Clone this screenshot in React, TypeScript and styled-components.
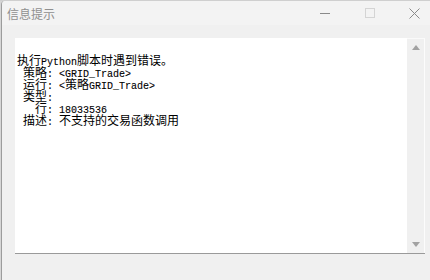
import React from 'react'
import styled, { createGlobalStyle } from 'styled-components'

const GlobalStyle = createGlobalStyle`
  html, body {
    margin: 0;
    padding: 0;
    width: 430px;
    height: 280px;
    overflow: hidden;
    background: #cfcfcf;
  }
`

const Desktop = styled.div`
  width: 430px;
  height: 280px;
  padding-left: 1px;
  box-sizing: border-box;
  background: #d6d6d6;
`

const Window = styled.div`
  display: flex;
  flex-direction: column;
  height: 279px;
  margin-top: 1px;
  border-left: 1px solid #9c9c9c;
  border-top-left-radius: 4px;
  background: #f0f0f0;
  overflow: hidden;
`

const TitleBar = styled.div`
  display: flex;
  align-items: center;
  height: 24px;
  background: #f3f3f3;
`

const Title = styled.span`
  flex: 1;
  padding-left: 5px;
  font-family: 'Noto Sans CJK SC', sans-serif;
  font-size: 12px;
  color: #8f8f8f;
`

const Controls = styled.div`
  display: flex;
  margin-right: -7px;
`

const ControlButton = styled.div`
  display: flex;
  align-items: center;
  justify-content: center;
  width: 45px;
  height: 24px;
`

const TextBox = styled.div`
  display: flex;
  height: 216px;
  margin: 13px 5px 0 13px;
  background: #fff;
  border-bottom: 1px solid #9a9a9a;
  box-sizing: border-box;
`

const Content = styled.div`
  flex: 1;
  padding: 16px 0 0 2px;
  color: #000;
`

const Line = styled.div`
  height: 12px;
  line-height: 12px;
  white-space: pre;
  font-family: 'Noto Sans CJK SC', sans-serif;
  font-size: 12px;
`

const Mono = styled.span`
  font-family: 'Liberation Mono', monospace;
  font-size: 10px;
  line-height: 12px;
  vertical-align: baseline;
  -webkit-text-stroke: 0.1px #000;
`

const ScrollBar = styled.div`
  display: flex;
  flex-direction: column;
  justify-content: space-between;
  width: 17px;
  background: #f0f0f0;
  border-right: 1px solid #fcfcfc;
  border-top: 1px solid #fafafa;
`

const ArrowButton = styled.div`
  display: flex;
  align-items: center;
  justify-content: center;
  height: 17px;
`

const Arrow: React.FC<{ down?: boolean }> = ({ down }) => (
  <svg width="8" height="5" viewBox="0 0 8 5">
    <polygon points={down ? '0,0 8,0 4,5' : '0,5 8,5 4,0'} fill="#a2a2a2" />
  </svg>
)

export default function App() {
  return (
    <>
      <GlobalStyle />
      <Desktop>
        <Window>
          <TitleBar>
            <Title>信息提示</Title>
            <Controls>
              <ControlButton>
                <svg width="10" height="10" viewBox="0 0 10 10">
                  <line x1="0" y1="5.5" x2="10" y2="5.5" stroke="#8a8a8a" strokeWidth="1" />
                </svg>
              </ControlButton>
              <ControlButton>
                <svg width="10" height="10" viewBox="0 0 10 10">
                  <rect x="0.5" y="0.5" width="9" height="9" fill="none" stroke="#d4d4d4" strokeWidth="1" />
                </svg>
              </ControlButton>
              <ControlButton>
                <svg width="11" height="11" viewBox="0 0 11 11">
                  <path d="M0.5 0.5 L10.5 10.5 M10.5 0.5 L0.5 10.5" stroke="#8a8a8a" strokeWidth="1" />
                </svg>
              </ControlButton>
            </Controls>
          </TitleBar>
          <TextBox>
            <Content>
              <Line>
                执行<Mono>Python</Mono>脚本时遇到错误。
              </Line>
              <Line>
                <Mono> </Mono>策略<Mono>: &lt;GRID_Trade&gt;</Mono>
              </Line>
              <Line>
                <Mono> </Mono>运行<Mono>: &lt;</Mono>策略<Mono>GRID_Trade&gt;</Mono>
              </Line>
              <Line>
                <Mono> </Mono>类型<Mono>:</Mono>
              </Line>
              <Line>
                <Mono>   </Mono>行<Mono>: 18033536</Mono>
              </Line>
              <Line>
                <Mono> </Mono>描述<Mono>: </Mono>不支持的交易函数调用
              </Line>
            </Content>
            <ScrollBar>
              <ArrowButton>
                <Arrow />
              </ArrowButton>
              <ArrowButton>
                <Arrow down />
              </ArrowButton>
            </ScrollBar>
          </TextBox>
        </Window>
      </Desktop>
    </>
  )
}
